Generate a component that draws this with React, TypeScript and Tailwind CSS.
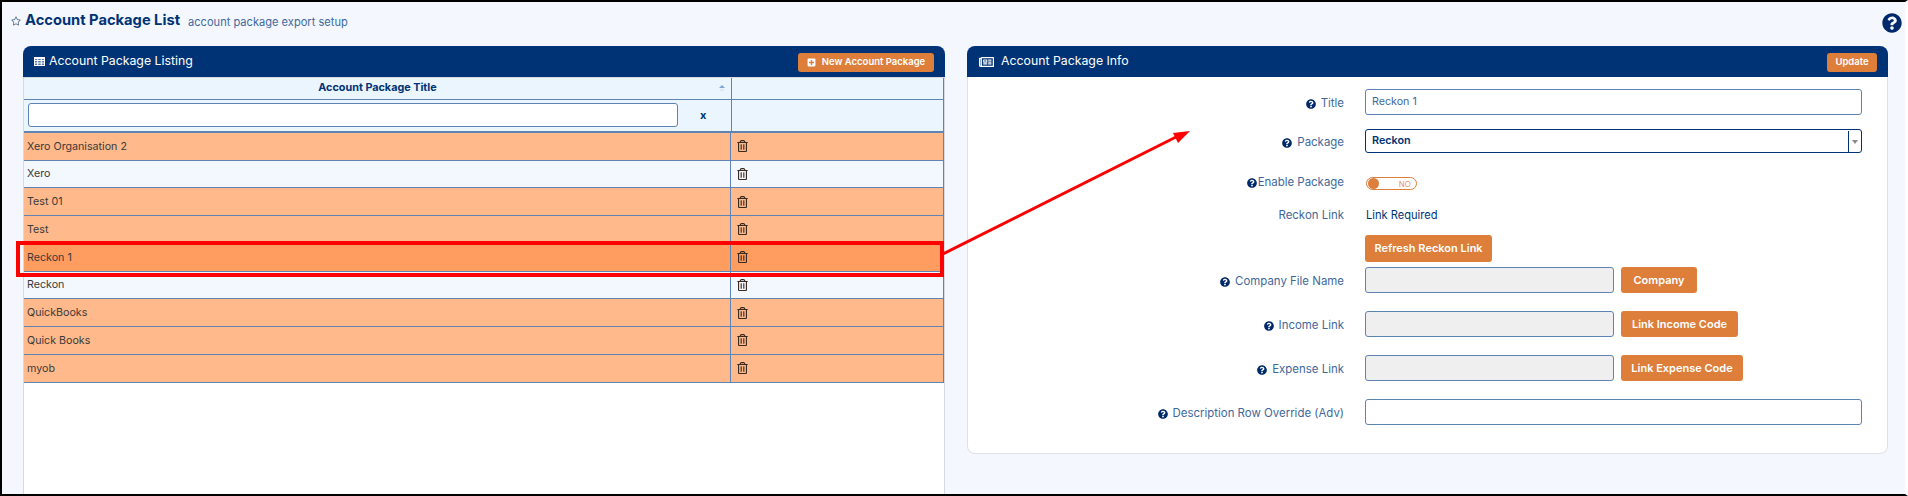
import React from 'react';
import { FaQuestionCircle, FaRegNewspaper, FaRegStar, FaRegTrashAlt, FaPlusSquare } from 'react-icons/fa';

const rows = [
  { title: 'Xero Organisation 2', bg: 'bg-[#ffb98a]' },
  { title: 'Xero', bg: 'bg-[#f3f8fe]' },
  { title: 'Test 01', bg: 'bg-[#ffb98a]' },
  { title: 'Test', bg: 'bg-[#ffb98a]' },
  { title: 'Reckon 1', bg: 'bg-[#ff9c5f]' },
  { title: 'Reckon', bg: 'bg-[#f3f8fe]' },
  { title: 'QuickBooks', bg: 'bg-[#ffb98a]' },
  { title: 'Quick Books', bg: 'bg-[#ffb98a]' },
  { title: 'myob', bg: 'bg-[#ffb98a]' },
];

const Label = ({ text, icon = true, tight = false, className = 'pt-[4px]' }: { text: string; icon?: boolean; tight?: boolean; className?: string }) => (
  <div className={`w-[376px] shrink-0 flex items-center justify-end text-[11.45px] text-[#3f689c] ${className}`}>
    {icon && <FaQuestionCircle className={`w-[10px] h-[10px] text-[#00296b] ${tight ? 'mr-px' : 'mr-[5px]'}`} />}
    <span>{text}</span>
  </div>
);

const Button = ({ text, className = '' }: { text: string; className?: string }) => (
  <button className={`h-[26px] rounded-[3px] bg-[#dd7e3b] text-white text-[11px] font-semibold flex items-center justify-center ${className}`}>
    {text}
  </button>
);

const LinkRow = ({ label, button, width, className = '' }: { label: string; button: string; width: string; className?: string }) => (
  <div className={`flex h-[26px] ${className}`}>
    <Label text={label} />
    <div className="ml-[21px] w-[249px] h-[26px] rounded-[3px] border border-[#5f83b3] bg-[#efefef]" />
    <Button text={button} className={`ml-[7px] ${width}`} />
  </div>
);

const App = () => {
  return (
    <div className="relative h-[496px] overflow-hidden border-2 border-r-[3px] border-black border-r-white bg-[#f4f8fe] text-[#003375] font-['Inter',sans-serif]">
      {/* Page title */}
      <div className="flex items-center h-[44px] pl-[9px] pr-[3px] pb-[8px]">
        <FaRegStar className="w-[10px] h-[10px] text-[#5f7590] mt-[2px]" />
        <h1 className="ml-[4px] text-[14.7px] leading-[20px] font-bold">Account Package List</h1>
        <span className="ml-[8px] mt-[4px] text-[11.1px] text-[#3f689c]">account package export setup</span>
        <FaQuestionCircle className="ml-auto mt-[6px] w-[20px] h-[20px] text-[#00296b]" />
      </div>

      <div className="flex gap-[22px] pl-[21px]">
        {/* Listing */}
        <section className="w-[922px] shrink-0 h-[448px] flex flex-col">
          <header className="h-[31px] shrink-0 rounded-t-[8px] bg-[#003375] flex items-center pl-[11px] pr-[11px] text-white">
            <svg width="11" height="9" viewBox="0 0 11 9" className="shrink-0" fill="none" stroke="#ffffff" strokeWidth="1">
              <rect x="0.5" y="0.5" width="10" height="8" fill="#ffffff" fillOpacity="0.35" />
              <path d="M0 1.5H11M0 3.5H11M0 6H11M3.7 1V9M7.3 1V9" />
            </svg>
            <span className="ml-[4px] text-[12.3px]">Account Package Listing</span>
            <button className="ml-auto mt-[2px] h-[19px] w-[136px] rounded-[3px] bg-[#dd7e3b] text-[9.5px] font-semibold flex items-center justify-center">
              <FaPlusSquare className="w-[9px] h-[9px] mr-[6px]" />
              New Account Package
            </button>
          </header>
          <div className="flex-1 bg-white border-x border-t border-[#d5d9e0]">
            <div className="border-r border-[#5f83b3]">
              <div className="flex h-[22px] bg-[#ebf5fe] border-b border-[#5f83b3]">
                <div className="relative w-[708px] border-r border-[#5f83b3] flex items-center justify-center text-[10.8px] font-bold">
                  Account Package Title
                  <span className="absolute right-[6px] top-[7px] w-0 h-0 border-x-[3px] border-x-transparent border-b-[3px] border-b-[#7fa5d8]" />
                  <span className="absolute right-[6px] top-[11px] w-0 h-0 border-x-[3px] border-x-transparent border-t-[3px] border-t-[#dbe8f7]" />
                </div>
              </div>
              <div className="flex h-[32.75px] bg-[#ebf5fe] border-b-2 border-[#5f83b3]">
                <div className="w-[708px] border-r border-[#5f83b3] flex items-center pl-[4px]">
                  <input className="w-[650px] h-[24px] rounded-[3px] border border-[#5f83b3] bg-white" />
                  <span className="ml-[22px] text-[11px] font-bold">x</span>
                </div>
              </div>
              {rows.map(row => (
                <div key={row.title} className={`flex h-[27.75px] border-b border-[#5f83b3] ${row.bg}`}>
                  <div className="w-[707px] border-r border-[#5f83b3] flex items-center pl-[3px] pt-px text-[10.7px] text-[#3a3a3a]">
                    {row.title}
                  </div>
                  <div className="flex items-center pl-[6px]">
                    <FaRegTrashAlt className="w-[11px] h-[12px] text-[#3a2a20]" />
                  </div>
                </div>
              ))}
            </div>
          </div>
        </section>

        {/* Info */}
        <section className="w-[921px] shrink-0 h-[408px] rounded-[8px] bg-white border-x border-b border-[#dde1e6]">
          <header className="h-[31px] -mx-px rounded-t-[8px] bg-[#003375] flex items-center pl-[12px] pr-[11px] text-white">
            <FaRegNewspaper className="w-[15px] h-[14px]" />
            <span className="ml-[7px] text-[12.3px]">Account Package Info</span>
            <button className="ml-auto mt-[2px] h-[19px] w-[50px] rounded-[3px] bg-[#dd7e3b] text-[9.5px] font-semibold">Update</button>
          </header>
          <div className="pt-[12px]">
            <div className="flex h-[26px]">
              <Label text="Title" />
              <input
                readOnly
                value="Reckon 1"
                className="ml-[21px] w-[497px] rounded-[3px] border border-[#5f83b3] bg-white px-[6px] text-[10.7px] text-[#3f689c]"
              />
            </div>
            <div className="flex h-[24px] mt-[14px]">
              <Label text="Package" />
              <div className="ml-[21px] w-[497px] rounded-[3px] border border-[#003375] bg-white flex items-center pl-[6px] pt-px text-[10.8px] font-semibold">
                Reckon
                <span className="ml-auto w-[13px] h-full border-l border-[#003375] flex items-center justify-center">
                  <span className="w-0 h-0 border-x-[3px] border-x-transparent border-t-[4px] border-t-[#8a8a8a]" />
                </span>
              </div>
            </div>
            <div className="flex h-[13px] mt-[24px]">
              <Label text="Enable Package" tight className="pb-[1px]" />
              <div className="ml-[22px] relative w-[51px] h-[13px] rounded-full border border-[#dd7e3b] bg-white flex items-center justify-end pr-[5px] text-[8px] text-[#f08f5e]">
                <span className="absolute left-[1px] top-[0px] w-[11px] h-[11px] rounded-full bg-[#dd7e3b]" />
                NO
              </div>
            </div>
            <div className="flex items-center h-[14px] mt-[18px]">
              <Label text="Reckon Link" icon={false} className="pt-[1px]" />
              <span className="ml-[22px] text-[11.1px]">Link Required</span>
            </div>
            <div className="pl-[397px] mt-[13px]">
              <Button text="Refresh Reckon Link" className="w-[127px] h-[27px] text-[9.5px]" />
            </div>
            <LinkRow label="Company File Name" button="Company" width="w-[76px]" className="mt-[5px]" />
            <LinkRow label="Income Link" button="Link Income Code" width="w-[117px]" className="mt-[18px]" />
            <LinkRow label="Expense Link" button="Link Expense Code" width="w-[122px]" className="mt-[18px]" />
            <div className="flex h-[26px] mt-[18px]">
              <Label text="Description Row Override (Adv)" />
              <input className="ml-[21px] w-[497px] rounded-[3px] border border-[#5f83b3] bg-white" />
            </div>
          </div>
        </section>
      </div>

      {/* Annotation over the screenshot */}
      <div className="absolute left-[14px] top-[239px] w-[928px] h-[36px] border-4 border-[#ff0000]" />
      <svg className="absolute left-[941px] top-[123px]" width="250" height="135" viewBox="0 0 250 135">
        <line x1="0" y1="129" x2="235" y2="11" stroke="#ff0000" strokeWidth="3" />
        <polygon points="247,6 230,8 235,18" fill="#ff0000" />
      </svg>
    </div>
  );
};

export default App;
